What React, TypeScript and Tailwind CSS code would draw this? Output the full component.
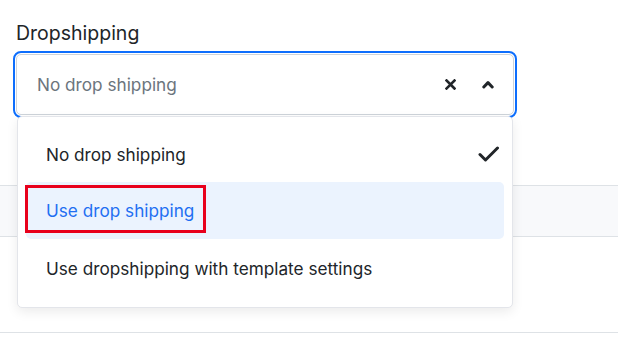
import React from "react";

export default function App() {
  return (
    <div className="w-[618px] h-[350px] bg-white overflow-hidden font-['Inter','Noto_Sans',sans-serif] text-[#212529]">
      <div className="px-4 pt-[21px]">
        <label className="block text-[19.5px] leading-[24px] text-[#212529]">Dropshipping</label>
        <div className="relative mt-[9px] z-10 w-[498px]">
          <div className="h-[61px] rounded-[5px] border border-[#ced4da] outline-2 outline-offset-1 outline-[#0d6efd] flex items-center pl-[20px] pr-[19px] bg-white">
            <span className="flex-1 text-[17.2px] text-[#6c757d] pt-[1px]">No drop shipping</span>
            <svg width="11" height="11" viewBox="0 0 11 11" className="mr-[26px]">
              <path d="M1.5 1.5 L9.5 9.5 M9.5 1.5 L1.5 9.5" stroke="#212529" strokeWidth="2.6" strokeLinecap="square" fill="none" />
            </svg>
            <svg width="12" height="9" viewBox="0 0 12 9">
              <path d="M1.8 7 L6 2.6 L10.2 7" stroke="#212529" strokeWidth="3" strokeLinecap="round" strokeLinejoin="round" fill="none" />
            </svg>
          </div>
          <div className="absolute top-full left-[1px] right-[1px] mt-[1px] rounded-[5px] border border-[#e3e5ea] bg-white shadow-[0_4px_12px_rgba(0,0,0,0.08)] pt-[8px] pb-[11px] px-[8px]">
            <div className="h-[57px] flex items-center pl-[20px] pr-[4px] pt-[2px] text-[17.2px] text-[#212529]">
              <span className="flex-1">No drop shipping</span>
              <svg width="22" height="18" viewBox="0 0 22 18" className="-mt-[2px]">
                <path d="M2 9.5 L7.5 15 L19.5 3" stroke="#212529" strokeWidth="3" strokeLinecap="round" strokeLinejoin="round" fill="none" />
              </svg>
            </div>
            <div className="relative h-[57px] flex items-center pl-[20px] rounded-[5px] bg-[#ebf3fe] text-[17.2px] text-[#1f6ff2]">
              <span>Use drop shipping</span>
              <div className="absolute left-[-1px] top-[3px] w-[181px] h-[48px] border-[3px] border-[#e8001c]" />
            </div>
            <div className="h-[57px] flex items-center pl-[20px] pt-[2px] text-[17.2px] text-[#212529]">
              Use dropshipping with template settings
            </div>
          </div>
        </div>
      </div>
      <div className="mt-[70px] h-[52px] border-y border-[#dee2e6] bg-[#f8f9fb]" />
      <div className="h-[96px] border-b border-[#dee2e6]" />
    </div>
  );
}
